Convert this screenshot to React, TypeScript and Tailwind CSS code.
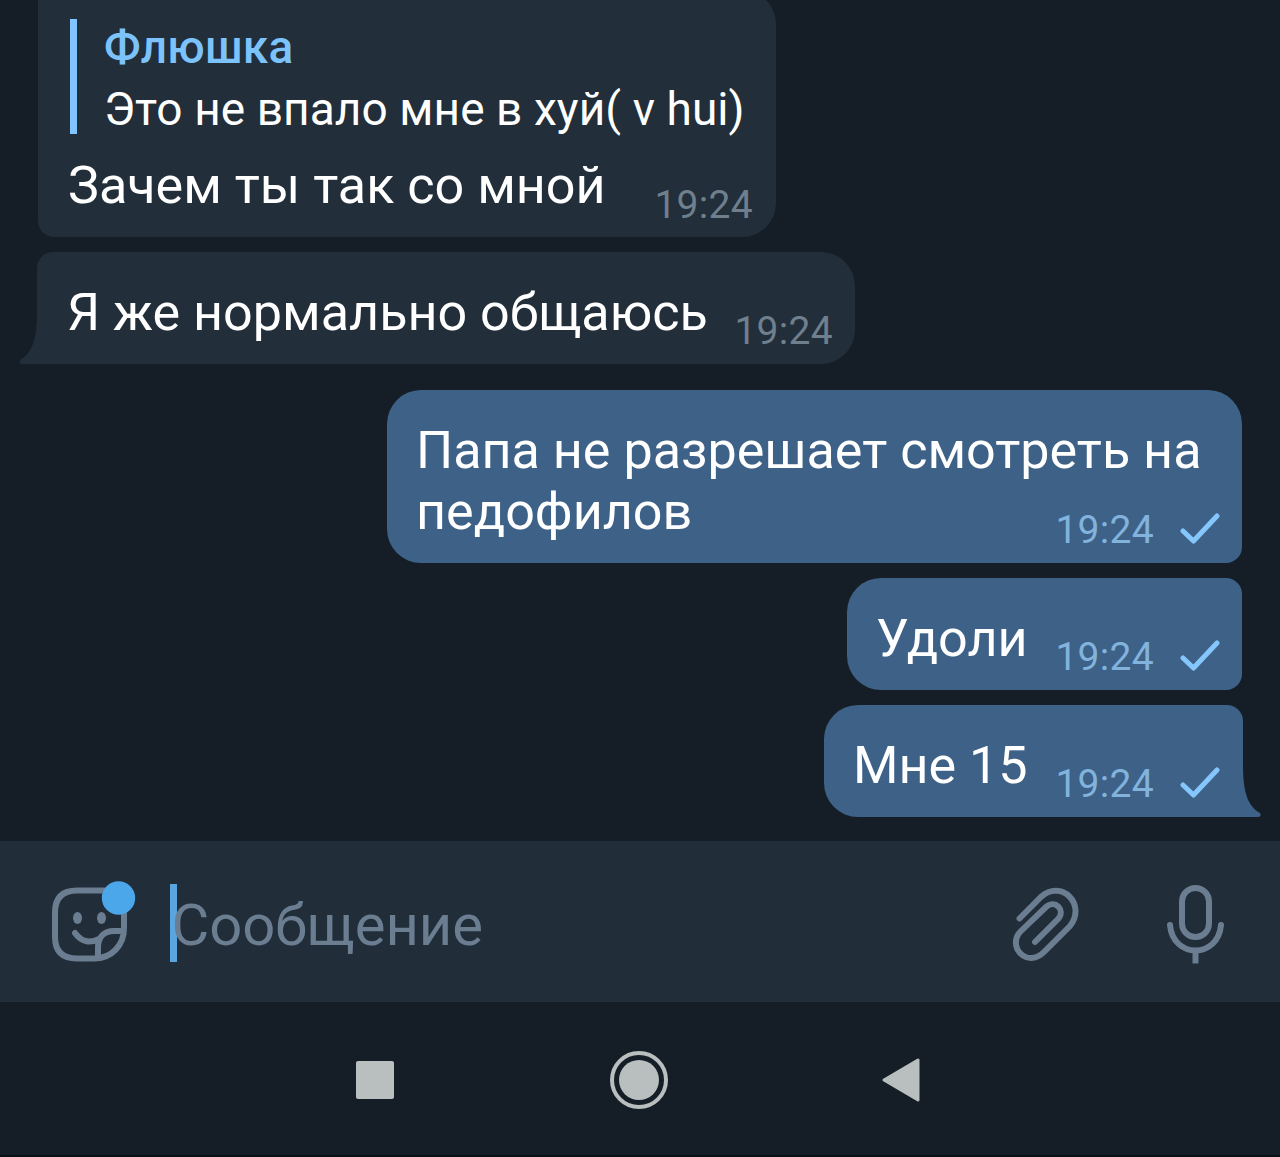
import type { ReactNode } from 'react';

export default function App() {
  return (
    <main className="flex h-[1157px] w-[1280px] flex-col overflow-hidden bg-[#151e26] font-[Roboto,sans-serif]">
      <div className="flex h-[841px] flex-col">
        <Bubble className="-mt-[10px] ml-[38px] h-[247px] w-[738px] rounded-r-[34px] rounded-bl-[16px] px-[30px]">
          <div className="flex h-[144px] gap-[27px] pt-[29px] pl-[2px]">
            <div className="h-[115px] w-[7px] bg-[#82c4fe]" />
            <div className="whitespace-nowrap text-[46px]">
              <p className="h-[63px] pt-px leading-[54px] font-medium tracking-[0.2px] text-[#7cc3fb]">Флюшка</p>
              <p className="leading-[54px] tracking-[0.08px] text-white">Это не впало мне в хуй( v hui)</p>
            </div>
          </div>
          <div className="mt-[21px] flex justify-between">
            <Message>Зачем ты так со мной</Message>
            <Time className="mt-[27px] -mr-[7px]" />
          </div>
        </Bubble>

        <Bubble className="mt-[15px] ml-[37px] flex h-[112px] w-[818px] justify-between rounded-r-[34px] rounded-tl-[16px] pt-[30px] pr-[22px] pl-[30px]">
          <Message>Я же нормально общаюсь</Message>
          <Time className="mt-[26px]" />
          <svg className="absolute bottom-0 -left-[18px] h-[52px] w-[19px]" viewBox="0 0 19 52">
            <path d="M19 0H18C18 25 14 41 1 48Q-1 52 3 52H19Z" fill="#222e39" />
          </svg>
        </Bubble>

        <Bubble out className="mt-[26px] mr-[38px] h-[173px] w-[855px] rounded-[34px] rounded-br-[16px]">
          <Message>
            Папа не разрешает смотреть на
            <br />
            педофилов
          </Message>
          <Status />
        </Bubble>
        <Bubble out className="mt-[15px] mr-[38px] h-[112px] w-[395px] rounded-l-[34px] rounded-r-[16px]">
          <Message>Удоли</Message>
          <Status />
        </Bubble>
        <Bubble out className="mt-[15px] mr-[37px] h-[112px] w-[419px] rounded-l-[34px] rounded-tr-[16px] pr-[23px]">
          <Message>Мне 15</Message>
          <Status />
          <svg className="absolute bottom-0 -right-[18px] h-[52px] w-[19px]" viewBox="0 0 19 52">
            <path d="M0 0H1C1 25 5 41 18 48Q20 52 16 52H0Z" fill="#3e6187" />
          </svg>
        </Bubble>
      </div>

      <div className="flex h-[161px] items-center bg-[#212d39]">
        <StickerIcon />
        <div className="mt-[2px] ml-[32.5px] h-[78px] w-[7px] bg-[#59a5e0]" />
        <p className="-ml-[5px] mt-[6px] text-[58px] leading-[68px] tracking-[-0.1px] text-[#6b7d90]">Сообщение</p>
        <svg className="mb-[3px] ml-auto h-[120px] w-[260px] shrink-0" viewBox="0 0 260 120" fill="none" stroke="#6b7d90" strokeWidth="6" strokeLinecap="round">
          <path d="M29.5 58.5L51 37C71 19 97 44 80 66L54 92C37 109 16 86 31 71L56 47C65 39 76 50 68 59L45 82" />
          <rect x="192" y="28" width="27" height="49" rx="13.5" />
          <path d="M180 65C183 99 228 99 231 65" />
          <path d="M205.500 91V103.500" strokeLinecap="butt" />
        </svg>
        <div className="w-[30px]" />
      </div>

      <div className="flex h-[155px] items-center border-b-2 border-[#0b1015] pt-[2px] pl-[355.5px]">
        <div className="h-[38px] w-[38px] rounded-[2px] bg-[#b9bebf]" />
        <div className="ml-[216.5px] flex h-[58px] w-[58px] items-center justify-center rounded-full border-[4.5px] border-[#b9bebf]">
          <div className="h-[40px] w-[40px] rounded-full bg-[#b9bebf]" />
        </div>
        <svg className="ml-[214px] h-[44px] w-[38px]" viewBox="0 0 38 44">
          <path d="M2 22L36 2V42Z" fill="#b9bebf" stroke="#b9bebf" strokeWidth="3" strokeLinejoin="round" />
        </svg>
      </div>
    </main>
  );
}

function Bubble({ out, className, children }: { out?: boolean; className: string; children: ReactNode }) {
  const side = out ? 'flex justify-between self-end bg-[#3e6187] pt-[29.5px] pl-[29px] pr-[22px]' : 'self-start bg-[#222e39]';
  return <div className={`relative shrink-0 ${side} ${className}`}>{children}</div>;
}

function Message({ children }: { children: ReactNode }) {
  return <p className="text-[52.1px] leading-[61.5px] whitespace-nowrap text-white">{children}</p>;
}

function Time({ className }: { className?: string }) {
  return <span className={`text-[39px] leading-[46px] tracking-[0.3px] text-[#6f7f8d] ${className}`}>19:24</span>;
}

function Status() {
  return (
    <div className="mb-[10px] -ml-[200px] flex items-center gap-[26px] self-end">
      <span className="text-[39px] leading-[46px] tracking-[0.3px] text-[#81b3dd]">19:24</span>
      <svg className="mb-[2px] h-[32px] w-[40px]" viewBox="0 0 40 32" fill="none" stroke="#85c6fd" strokeWidth="5" strokeLinecap="round" strokeLinejoin="round">
        <path d="M3 18L13.500 28L37 3" />
      </svg>
    </div>
  );
}

function StickerIcon() {
  return (
    <svg className="ml-[50px] h-[90px] w-[87px] shrink-0" viewBox="50 877 87 90" fill="none" stroke="#6b7d90" strokeWidth="6" strokeLinecap="round">
      <path d="M105 890.500H77Q55 890.500 55 912.500V937Q55 958.500 77 958.500H94C112 958.500 124 945 124 928V908" />
      <path d="M75 933C82 943 91 943 99 939M98 957V948C98 937 104 931 114 931H122" />
      <ellipse cx="77.500" cy="918" rx="4.500" ry="6" fill="#6b7d90" stroke="none" />
      <ellipse cx="101.500" cy="918" rx="4.500" ry="6" fill="#6b7d90" stroke="none" />
      <circle cx="118.500" cy="898" r="16.700" fill="#4ca6ea" stroke="none" />
    </svg>
  );
}
